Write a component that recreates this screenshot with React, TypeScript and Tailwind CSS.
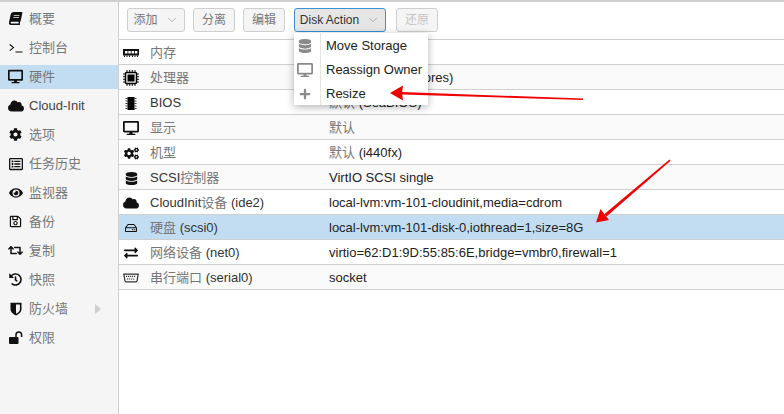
import type { ReactNode } from "react";
import { ChevronDown } from "lucide-react";
import {
  FaBook,
  FaCloud,
  FaCog,
  FaCogs,
  FaDatabase,
  FaDesktop,
  FaExchangeAlt,
  FaEye,
  FaHistory,
  FaPlus,
  FaRegHdd,
  FaRegListAlt,
  FaRegSave,
  FaRetweet,
} from "react-icons/fa";

const SerialIcon = () => (
  <svg width="16" height="10" viewBox="0 0 16 10" fill="none" stroke="#333" strokeWidth="1.2">
    <path d="M.8 1.2h14.4l-1.1 6.4a1.5 1.5 0 0 1-1.5 1.2H3.4a1.5 1.5 0 0 1-1.5-1.2z" />
    <path d="M3 3.4h10M4 6h8" strokeDasharray="1.2 .8" />
  </svg>
);

const TerminalIcon = () => (
  <svg width="14" height="10" viewBox="0 0 14 10" fill="none" stroke="#111" strokeWidth="1.1">
    <path d="M.7 1.5 4.5 4.6.7 7.6M6.5 9h7" />
  </svg>
);

const MemoryIcon = () => (
  <svg width="16" height="8" viewBox="0 0 16 8">
    <rect x="0" y="0" width="16" height="6.500" fill="#111" />
    <path d="M2 2h2.500v2.500H2zM5.300 2h2.500v2.500H5.300zM8.600 2h2.500v2.500H8.600zM11.900 2h2.500v2.500h-2.500z" fill="#fff" />
    <path d="M1.500 6.500V8M4 6.500V8M6.500 6.500V8M9.500 6.500V8M12 6.500V8M14.500 6.500V8" stroke="#111" />
  </svg>
);

const CpuIcon = () => (
  <svg width="16" height="16" viewBox="0 0 16 16" fill="none">
    <rect x="2.500" y="2.500" width="11" height="11" rx="1" stroke="#000" strokeWidth="1.500" />
    <rect x="4.500" y="4.500" width="7" height="7" fill="#000" />
    <path d="M4 0v2M6.700 0v2M9.300 0v2M12 0v2M4 14v2M6.700 14v2M9.300 14v2M12 14v2M0 4h2M0 6.700h2M0 9.300h2M0 12h2M14 4h2M14 6.700h2M14 9.300h2M14 12h2" stroke="#111" />
  </svg>
);

const BiosIcon = () => (
  <svg width="12" height="13" viewBox="0 0 12 13" fill="none">
    <rect x="2.500" y="0" width="7" height="13" fill="#000" />
    <path d="M.5 1.500h2M.5 4h2M.5 6.500h2M.5 9h2M.5 11.500h2M9.500 1.500h2M9.500 4h2M9.500 6.500h2M9.500 9h2M9.500 11.500h2" stroke="#333" />
  </svg>
);

const ShieldIcon = () => (
  <svg width="12" height="14" viewBox="0 0 12 14">
    <path d="M.5.800h11v6.500c0 3-3 5-5.500 6.200C3.500 12.300.5 10.300.5 7.300z" fill="#111" />
    <path d="M6 2.400h3.900v4.900c0 2-2.100 3.500-3.900 4.500z" fill="#f5f5f5" />
  </svg>
);

const UnlockIcon = () => (
  <svg width="14" height="13" viewBox="0 0 14 13">
    <rect x="0" y="6" width="9.500" height="7" rx="1" fill="#111" />
    <path d="M7 6.500V3.800a2.800 2.800 0 0 1 5.600 0V6" fill="none" stroke="#111" strokeWidth="1.500" />
  </svg>
);

const navItems: { icon: ReactNode; label: string; active?: boolean; arrow?: boolean }[] = [
  { icon: <FaBook size={13} className="-skew-x-12" />, label: "概要" },
  { icon: <TerminalIcon />, label: "控制台" },
  { icon: <FaDesktop size={15} />, label: "硬件", active: true },
  { icon: <FaCloud size={16} />, label: "Cloud-Init" },
  { icon: <FaCog size={13} />, label: "选项" },
  { icon: <FaRegListAlt size={14} />, label: "任务历史" },
  { icon: <FaEye size={14} />, label: "监视器" },
  { icon: <FaRegSave size={13} />, label: "备份" },
  { icon: <FaRetweet size={15} />, label: "复制" },
  { icon: <FaHistory size={13} />, label: "快照" },
  { icon: <ShieldIcon />, label: "防火墙", arrow: true },
  { icon: <UnlockIcon />, label: "权限" },
];

const rows: { icon: ReactNode; label: string; value: string; alt?: boolean; selected?: boolean }[] = [
  { icon: <MemoryIcon />, label: "内存", value: "2.00 GiB" },
  { icon: <CpuIcon />, label: "处理器", value: "2 (1 sockets, 2 cores)", alt: true },
  { icon: <BiosIcon />, label: "BIOS", value: "默认 (SeaBIOS)" },
  { icon: <FaDesktop size={16} />, label: "显示", value: "默认", alt: true },
  { icon: <FaCogs size={15} />, label: "机型", value: "默认 (i440fx)" },
  { icon: <FaDatabase size={13} />, label: "SCSI控制器", value: "VirtIO SCSI single", alt: true },
  { icon: <FaCloud size={16} />, label: "CloudInit设备 (ide2)", value: "local-lvm:vm-101-cloudinit,media=cdrom" },
  { icon: <FaRegHdd size={12} />, label: "硬盘 (scsi0)", value: "local-lvm:vm-101-disk-0,iothread=1,size=8G", selected: true },
  { icon: <FaExchangeAlt size={14} />, label: "网络设备 (net0)", value: "virtio=62:D1:9D:55:85:6E,bridge=vmbr0,firewall=1" },
  { icon: <SerialIcon />, label: "串行端口 (serial0)", value: "socket", alt: true },
];

const menuItems: { icon: ReactNode; label: string }[] = [
  { icon: <FaDatabase size={14} />, label: "Move Storage" },
  { icon: <FaDesktop size={16} />, label: "Reassign Owner" },
  { icon: <FaPlus size={12} />, label: "Resize" },
];

// the CJK glyphs render lighter than the latin ones in the reference
const Mixed = ({ text, latin, cjk }: { text: string; latin: string; cjk: string }) => (
  <span className={`whitespace-nowrap ${latin}`}>
    {text.split(/([\u4e00-\u9fff]+)/).map((part, i) =>
      i % 2 === 1 ? (
        <span key={i} className={cjk}>
          {part}
        </span>
      ) : (
        part
      ),
    )}
  </span>
);

const ToolButton = ({ label, width, menu, open, disabled }: { label: string; width: string; menu?: boolean; open?: boolean; disabled?: boolean }) => (
  <div
    className={`flex h-6 ${width} items-center justify-center gap-[7px] rounded-[3px] border text-xs ${
      open ? "border-[#3892d4] bg-[#e6e6e6] text-[#333]" : "border-[#cfcfcf] bg-[#f5f5f5]"
    } ${disabled ? "text-[#c4c4c4]" : open ? "" : "text-[#777]"}`}
  >
    <span>{label}</span>
    {menu && <ChevronDown size={14} strokeWidth={1} className="text-[#888]" />}
  </div>
);

export default function App() {
  return (
    <div className="relative flex h-[414px] w-[784px] overflow-hidden bg-white font-['Liberation_Sans','Noto_Sans_CJK_SC',sans-serif] text-[13px] text-black">
      <aside className="flex h-full w-[119px] shrink-0 flex-col border-r border-t-2 border-[#cfcfcf] bg-[#f5f5f5] pt-[2px]">
        {navItems.map((item) => (
          <div key={item.label} className="flex h-[29px] items-center">
            <div className={`flex h-6 w-full items-center ${item.active ? "bg-[#c2ddf2]" : ""}`}>
              <span className="flex w-[29px] shrink-0 justify-center pl-[2px] text-[#111]">{item.icon}</span>
              <Mixed text={item.label} latin="text-[#444]" cjk="text-[#777]" />
              {item.arrow && (
                <span className="ml-[27px] h-0 w-0 border-y-[5px] border-l-[6px] border-y-transparent border-l-[#cfcfcf]" />
              )}
            </div>
          </div>
        ))}
      </aside>

      <main className="flex min-w-0 flex-1 flex-col border-t-2 border-[#cfcfcf]">
        <div className="flex h-[38px] shrink-0 items-center border-b border-[#cfcfcf] pb-px pl-2">
          <ToolButton label="添加" width="w-[58px]" menu />
          <div className="ml-2"><ToolButton label="分离" width="w-[42px]" /></div>
          <div className="ml-2"><ToolButton label="编辑" width="w-[42px]" /></div>
          <div className="ml-[9px]"><ToolButton label="Disk Action" width="w-[92px]" menu open /></div>
          <div className="ml-[10px]"><ToolButton label="还原" width="w-[42px]" disabled /></div>
        </div>
        {rows.map((row) => (
          <div
            key={row.label}
            className={`flex h-[25px] shrink-0 items-center border-b border-[#cfcfcf] pt-[2px] ${
              row.selected ? "bg-[#c2ddf2]" : row.alt ? "bg-[#fafafa]" : "bg-white"
            }`}
          >
            <span className="flex w-[24px] shrink-0 justify-center text-[#111]">{row.icon}</span>
            <span className="w-[179px] shrink-0 pl-[7px]">
              <Mixed text={row.label} latin="text-[#333]" cjk="text-[#777]" />
            </span>
            <span className="pl-[7px]">
              <Mixed text={row.value} latin="text-[#222]" cjk="text-[#777]" />
            </span>
          </div>
        ))}
      </main>

      <div className="absolute left-[294px] top-[33px] flex h-[72px] w-[134px] flex-col bg-white shadow-[0_2px_8px_rgba(0,0,0,0.3)]">
        <div className="absolute bottom-0 left-[26px] top-0 w-px bg-[#e4e4e4]" />
        {menuItems.map((item) => (
          <div key={item.label} className="flex h-6 items-center pt-[2px]">
            <span className="flex w-[22px] shrink-0 justify-center text-[#8a8a8a]">{item.icon}</span>
            <span className="whitespace-nowrap pl-[10px] text-[#222]">{item.label}</span>
          </div>
        ))}
      </div>

      <svg className="pointer-events-none absolute left-0 top-0" width="784" height="414">
        <path d="M583 98.500 583 100 402 94.500 402 92Z" fill="#f00000" />
        <path d="M390 93 403 85.500 402 93 403 100.500Z" fill="#f00000" />
        <path d="M669.500 159.500 670.500 160.800 606.500 216.500 604.500 214Z" fill="#f00000" />
        <path d="M596 222.500 600.500 209 605 215 609 220Z" fill="#f00000" />
      </svg>
    </div>
  );
}
